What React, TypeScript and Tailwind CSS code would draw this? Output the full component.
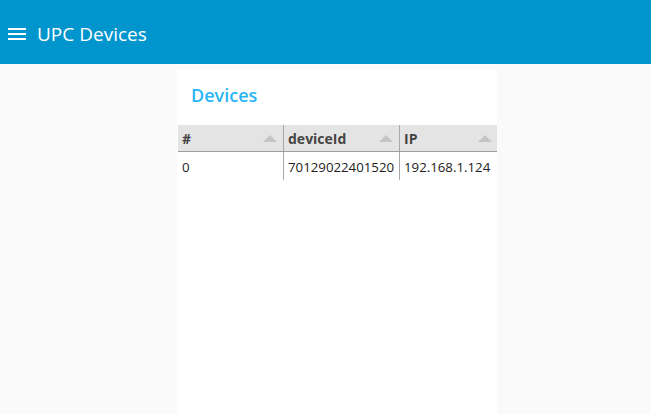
import React from "react";

const font = { fontFamily: '"Open Sans", "Noto Sans", sans-serif' };

function SortArrow() {
  return (
    <svg width="14" height="7" viewBox="0 0 14 7" className="shrink-0">
      <path d="M0 7 L7 0 L14 7 Z" fill="#c4c4c4" />
    </svg>
  );
}

const rows = [{ id: "0", deviceId: "70129022401520", ip: "192.168.1.124" }];

export default function App() {
  return (
    <div className="min-h-[414px] bg-[#fafafa] text-[#222]" style={font}>
      {/* top bar */}
      <header className="h-16 bg-[#0195cd] flex items-center pl-2 pt-1 gap-[11px] text-white">
        <svg width="18" height="12" viewBox="0 0 18 12">
          <rect x="0" y="0" width="18" height="2" fill="white" />
          <rect x="0" y="5" width="18" height="2" fill="white" />
          <rect x="0" y="10" width="18" height="2" fill="white" />
        </svg>
        <span className="text-[19px] leading-none">UPC Devices</span>
      </header>

      <main className="pl-[177px] pt-[6px]">
        <div className="w-[320px] min-h-[344px] bg-white overflow-hidden">
          <h2 className="pl-[14px] pt-[12px] h-[55px] text-[18px] font-semibold text-[#29b6f6]">
            Devices
          </h2>
          <div className="pl-px">
            <div className="flex w-[335px] h-[27px] bg-[#e4e4e4] border-b border-[#9e9e9e] text-[14px] font-bold text-[#444]">
              <div className="w-[106px] shrink-0 flex items-center justify-between pl-1 pr-[6px] border-r border-[#a8a8a8]">
                <span>#</span>
                <SortArrow />
              </div>
              <div className="w-[116px] shrink-0 flex items-center justify-between pl-1 pr-[6px] border-r border-[#a8a8a8]">
                <span>deviceId</span>
                <SortArrow />
              </div>
              <div className="w-[113px] shrink-0 flex items-center justify-between pl-1 pr-[21px]">
                <span>IP</span>
                <SortArrow />
              </div>
            </div>
            {rows.map((r) => (
              <div key={r.id} className="flex w-[335px] h-[28px] text-[13.25px] text-[#222]">
                <div className="w-[106px] shrink-0 flex items-center pl-1 pt-[3px] border-r border-[#a8a8a8]">{r.id}</div>
                <div className="w-[116px] shrink-0 flex items-center pl-1 pt-[3px] border-r border-[#a8a8a8] whitespace-nowrap">{r.deviceId}</div>
                <div className="w-[113px] shrink-0 flex items-center pl-1 pt-[3px] whitespace-nowrap">{r.ip}</div>
              </div>
            ))}
          </div>
        </div>
      </main>
    </div>
  );
}
